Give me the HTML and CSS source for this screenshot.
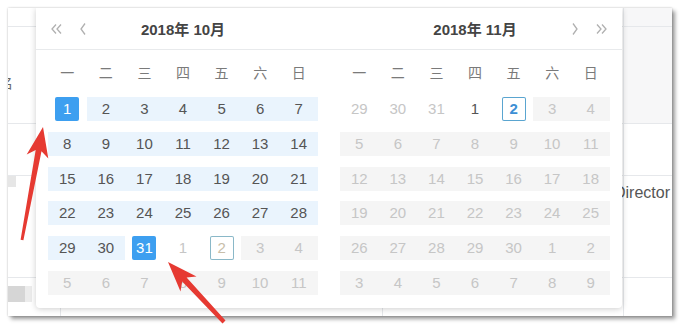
FILE: index.html
```html
<!DOCTYPE html>
<html lang="zh-CN">
<head>
    <meta charset="UTF-8">
    <title>日期范围选择</title>
    <link rel="stylesheet" href="styles.css">
</head>
<body>
    <div class="frame">
        <!-- table behind the picker -->
        <div class="table">
            <div class="row row-head">
                <div class="cell-l"></div>
                <div class="cell-m"></div>
                <div class="cell-r grey"></div>
            </div>
            <div class="row row-1">
                <div class="cell-l"><span class="name">姓名</span></div>
                <div class="cell-m"></div>
                <div class="cell-r grey"></div>
            </div>
            <div class="row row-2">
                <div class="cell-l"></div>
                <div class="cell-m"></div>
                <div class="cell-r"></div>
            </div>
            <div class="row row-3">
                <div class="cell-l"><span class="blob"></span></div>
                <div class="cell-m"></div>
                <div class="cell-r"><span class="job">Director</span></div>
            </div>
            <div class="row row-4">
                <div class="cell-l"><span class="blob big"></span></div>
                <div class="cell-m">
                    <span class="col-a"></span>
                    <span class="col-b"></span>
                </div>
                <div class="cell-r"></div>
            </div>
        </div>

        <div class="picker">
            <div class="picker-head">
                <div class="head-half">
                    <div class="nav">
                        <svg width="18" height="12" viewBox="0 0 18 12"><polyline points="8,1.5 4,6 8,10.5" /><polyline points="13,1.5 9,6 13,10.5" /></svg>
                        <svg width="18" height="12" viewBox="0 0 18 12"><polyline points="11,0.5 7,6 11,11.5" /></svg>
                    </div>
                    <div class="title">2018年 10月</div>
                    <div class="nav"></div>
                </div>
                <div class="head-half">
                    <div class="nav"></div>
                    <div class="title">2018年 11月</div>
                    <div class="nav">
                        <svg width="18" height="12" viewBox="0 0 18 12"><polyline points="7,0.5 11,6 7,11.5" /></svg>
                        <svg width="18" height="12" viewBox="0 0 18 12"><polyline points="5,1.5 9,6 5,10.5" /><polyline points="10,1.5 14,6 10,10.5" /></svg>
                    </div>
                </div>
            </div>

            <div class="picker-body">
                <div class="month">
                    <div class="week"><span>一</span><span>二</span><span>三</span><span>四</span><span>五</span><span>六</span><span>日</span></div>
                    <div class="days">
                        <span class="cell sel"><em>1</em></span>
                        <span class="cell range"><em>2</em></span>
                        <span class="cell range"><em>3</em></span>
                        <span class="cell range"><em>4</em></span>
                        <span class="cell range"><em>5</em></span>
                        <span class="cell range"><em>6</em></span>
                        <span class="cell range"><em>7</em></span>

                        <span class="cell range"><em>8</em></span>
                        <span class="cell range"><em>9</em></span>
                        <span class="cell range"><em>10</em></span>
                        <span class="cell range"><em>11</em></span>
                        <span class="cell range"><em>12</em></span>
                        <span class="cell range"><em>13</em></span>
                        <span class="cell range"><em>14</em></span>

                        <span class="cell range"><em>15</em></span>
                        <span class="cell range"><em>16</em></span>
                        <span class="cell range"><em>17</em></span>
                        <span class="cell range"><em>18</em></span>
                        <span class="cell range"><em>19</em></span>
                        <span class="cell range"><em>20</em></span>
                        <span class="cell range"><em>21</em></span>

                        <span class="cell range"><em>22</em></span>
                        <span class="cell range"><em>23</em></span>
                        <span class="cell range"><em>24</em></span>
                        <span class="cell range"><em>25</em></span>
                        <span class="cell range"><em>26</em></span>
                        <span class="cell range"><em>27</em></span>
                        <span class="cell range"><em>28</em></span>

                        <span class="cell range"><em>29</em></span>
                        <span class="cell range"><em>30</em></span>
                        <span class="cell sel"><em>31</em></span>
                        <span class="cell out"><em>1</em></span>
                        <span class="cell out focus"><em>2</em></span>
                        <span class="cell dis"><em>3</em></span>
                        <span class="cell dis"><em>4</em></span>

                        <span class="cell dis"><em>5</em></span>
                        <span class="cell dis"><em>6</em></span>
                        <span class="cell dis"><em>7</em></span>
                        <span class="cell dis"><em>8</em></span>
                        <span class="cell dis"><em>9</em></span>
                        <span class="cell dis"><em>10</em></span>
                        <span class="cell dis"><em>11</em></span>
                    </div>
                </div>

                <div class="month">
                    <div class="week"><span>一</span><span>二</span><span>三</span><span>四</span><span>五</span><span>六</span><span>日</span></div>
                    <div class="days">
                        <span class="cell out"><em>29</em></span>
                        <span class="cell out"><em>30</em></span>
                        <span class="cell out"><em>31</em></span>
                        <span class="cell"><em>1</em></span>
                        <span class="cell today focus"><em>2</em></span>
                        <span class="cell dis"><em>3</em></span>
                        <span class="cell dis"><em>4</em></span>

                        <span class="cell dis"><em>5</em></span>
                        <span class="cell dis"><em>6</em></span>
                        <span class="cell dis"><em>7</em></span>
                        <span class="cell dis"><em>8</em></span>
                        <span class="cell dis"><em>9</em></span>
                        <span class="cell dis"><em>10</em></span>
                        <span class="cell dis"><em>11</em></span>

                        <span class="cell dis"><em>12</em></span>
                        <span class="cell dis"><em>13</em></span>
                        <span class="cell dis"><em>14</em></span>
                        <span class="cell dis"><em>15</em></span>
                        <span class="cell dis"><em>16</em></span>
                        <span class="cell dis"><em>17</em></span>
                        <span class="cell dis"><em>18</em></span>

                        <span class="cell dis"><em>19</em></span>
                        <span class="cell dis"><em>20</em></span>
                        <span class="cell dis"><em>21</em></span>
                        <span class="cell dis"><em>22</em></span>
                        <span class="cell dis"><em>23</em></span>
                        <span class="cell dis"><em>24</em></span>
                        <span class="cell dis"><em>25</em></span>

                        <span class="cell dis"><em>26</em></span>
                        <span class="cell dis"><em>27</em></span>
                        <span class="cell dis"><em>28</em></span>
                        <span class="cell dis"><em>29</em></span>
                        <span class="cell dis"><em>30</em></span>
                        <span class="cell dis"><em>1</em></span>
                        <span class="cell dis"><em>2</em></span>

                        <span class="cell dis"><em>3</em></span>
                        <span class="cell dis"><em>4</em></span>
                        <span class="cell dis"><em>5</em></span>
                        <span class="cell dis"><em>6</em></span>
                        <span class="cell dis"><em>7</em></span>
                        <span class="cell dis"><em>8</em></span>
                        <span class="cell dis"><em>9</em></span>
                    </div>
                </div>
            </div>
        </div>
    </div>

    <!-- red annotation arrows -->
    <svg class="marks" width="681" height="325" viewBox="0 0 681 325">
        <polygon points="20.6,239.8 35.7,150 26.7,154.5 43,127 48.3,158.5 41.5,151.2 23.4,240.2" />
        <polygon points="225.5,320.6 186.6,277.5 196.5,276.4 168,262 180.5,291.4 182.2,281.5 222.5,323.4" />
    </svg>
</body>
</html>
```

FILE: styles.css
```css
body {
    margin: 0;
    background: #fff;
    font-family: 'Liberation Sans', 'Noto Sans CJK SC', sans-serif;
    position: relative;
    width: 681px;
    height: 325px;
    overflow: hidden;
}
.frame {
    position: relative;
    margin: 8px 0 0 8px;
    width: 664px;
    height: 308px;
    background: #fff;
    overflow: hidden;
    box-shadow: 0 0 2px rgba(0, 0, 0, 0.25), 3px 3px 4px rgba(0, 0, 0, 0.4);
}

/* table behind */
.table {
    display: flex;
    flex-direction: column;
    height: 100%;
}
.row {
    display: flex;
    border-bottom: 1px solid #e6e8eb;
}
.row-head { height: 18px; }
.row-1 { height: 96px; }
.row-2 { height: 51px; }
.row-3 { height: 101px; }
.row-4 { flex: 1; border-bottom: none; }
.cell-l {
    width: 27px;
    position: relative;
}
.cell-m {
    flex: 1;
    display: flex;
}
.cell-r {
    width: 48px;
    border-left: 1px solid #e6e8eb;
}
.cell-r.grey {
    background: #f7f7f8;
}
.name {
    display: block;
    margin: 45px 0 0 -23px;
    font-size: 14px;
    color: #666;
    white-space: nowrap;
}
.blob {
    display: block;
    width: 8px;
    height: 11px;
    background: #e6e6e6;
}
.blob.big {
    width: 17px;
    height: 16px;
    margin-top: 8px;
    background: #d6d6d6;
    box-shadow: 7px 0 0 #ececec;
}
.col-a {
    width: 25px;
    border-right: 1px solid #e6e8eb;
}
.col-b {
    width: 321px;
    border-right: 1px solid #e6e8eb;
}
.job {
    display: block;
    margin: 8px 0 0 -10px;
    font-size: 16px;
    color: #555;
    white-space: nowrap;
}

/* date picker */
.picker {
    position: absolute;
    top: 0;
    left: 28px;
    width: 586px;
    height: 300px;
    background: #fff;
    border-radius: 0 0 4px 4px;
    box-shadow: 0 1px 6px rgba(0, 0, 0, 0.2);
}
.picker-head {
    display: grid;
    grid-template-columns: 270px 270px;
    column-gap: 22px;
    padding: 0 12px;
    height: 41px;
    border-bottom: 1px solid #e8eaec;
}
.head-half {
    display: flex;
    align-items: center;
}
.nav {
    width: 44px;
    display: flex;
    justify-content: space-between;
}
.nav svg polyline {
    fill: none;
    stroke: #b0b0b0;
    stroke-width: 1.3;
}
.title {
    flex: 1;
    text-align: center;
    font-size: 15px;
    font-weight: bold;
    color: #444;
}
.picker-body {
    display: grid;
    grid-template-columns: 270px 270px;
    column-gap: 22px;
    padding: 6px 12px 8px;
}
.week {
    display: grid;
    grid-template-columns: repeat(7, 1fr);
    height: 32px;
    align-items: center;
    text-align: center;
    font-size: 14px;
    color: #7a7a7a;
    margin-bottom: 4px;
}
.days {
    display: grid;
    grid-template-columns: repeat(7, 1fr);
    grid-auto-rows: 34.7px;
}
.cell {
    position: relative;
    display: flex;
    align-items: center;
    justify-content: center;
    font-size: 15px;
    color: #555;
}
.cell em {
    position: relative;
    font-style: normal;
    width: 24px;
    height: 24px;
    line-height: 24px;
    text-align: center;
    border-radius: 2px;
}
.cell.range::before,
.cell.dis::before {
    content: "";
    position: absolute;
    left: 0;
    right: 0;
    top: 50%;
    height: 24px;
    margin-top: -12px;
    background: #eaf4fd;
}
.cell.dis::before {
    background: #f5f5f5;
}
.cell.out,
.cell.dis {
    color: #c6c6c6;
}
.cell.sel em {
    background: #3d9ff0;
    color: #fff;
}
.cell.focus em {
    box-shadow: inset 0 0 0 1px #8ab8c8;
    color: #c8bea9;
}
.cell.today em {
    box-shadow: inset 0 0 0 1px #5aa5d0;
    color: #3d8fd4;
    font-weight: bold;
}

/* annotation arrows */
.marks {
    position: absolute;
    top: 0;
    left: 0;
}
.marks polygon {
    fill: #e63a32;
}
```
